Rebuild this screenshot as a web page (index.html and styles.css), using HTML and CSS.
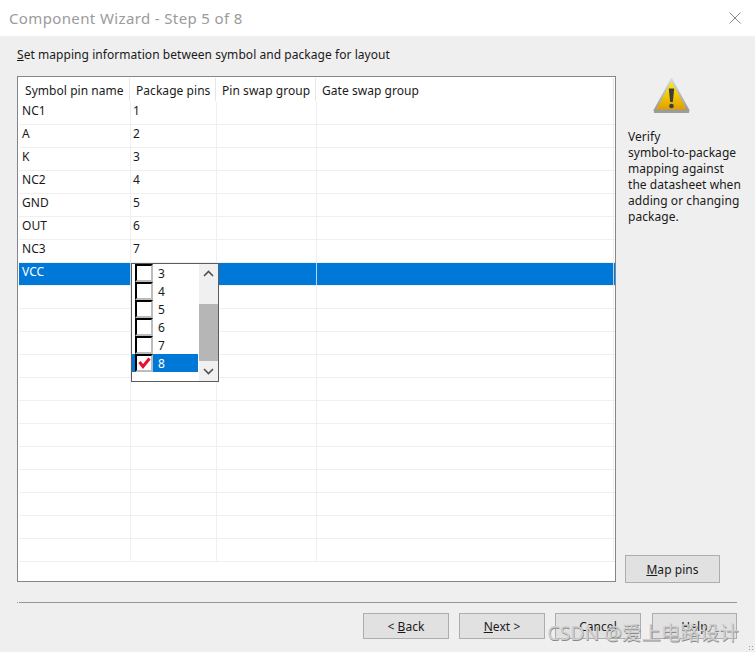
FILE: index.html
```html
<!DOCTYPE html>
<html lang="en">
<head>
<meta charset="utf-8">
<title>Component Wizard - Step 5 of 8</title>
<link rel="stylesheet" href="styles.css">
</head>
<body>
<div class="window">
  <header class="titlebar">
    <span class="title">Component Wizard - Step 5 of 8</span>
    <svg class="close" width="12" height="12" viewBox="0 0 12 12"><path d="M0.5 0.5L11.5 11.5M11.5 0.5L0.5 11.5" stroke="#8a8a8a" stroke-width="1" fill="none"/></svg>
  </header>
  <main class="content">
    <p class="instruction"><u>S</u>et mapping information between symbol and package for layout</p>
    <div class="columns">
      <div class="grid-box">
        <div class="row head"><div class="cell">Symbol pin name</div><div class="cell">Package pins</div><div class="cell">Pin swap group</div><div class="cell">Gate swap group</div></div>
        <div class="row"><div class="cell">NC1</div><div class="cell">1</div><div class="cell"></div><div class="cell"></div></div>
        <div class="row"><div class="cell">A</div><div class="cell">2</div><div class="cell"></div><div class="cell"></div></div>
        <div class="row"><div class="cell">K</div><div class="cell">3</div><div class="cell"></div><div class="cell"></div></div>
        <div class="row"><div class="cell">NC2</div><div class="cell">4</div><div class="cell"></div><div class="cell"></div></div>
        <div class="row"><div class="cell">GND</div><div class="cell">5</div><div class="cell"></div><div class="cell"></div></div>
        <div class="row"><div class="cell">OUT</div><div class="cell">6</div><div class="cell"></div><div class="cell"></div></div>
        <div class="row"><div class="cell">NC3</div><div class="cell">7</div><div class="cell"></div><div class="cell"></div></div>
        <div class="row selected"><div class="cell">VCC</div><div class="cell"></div><div class="cell"></div><div class="cell"></div></div>
        <div class="row"><div class="cell"></div><div class="cell"></div><div class="cell"></div><div class="cell"></div></div>
        <div class="row"><div class="cell"></div><div class="cell"></div><div class="cell"></div><div class="cell"></div></div>
        <div class="row"><div class="cell"></div><div class="cell"></div><div class="cell"></div><div class="cell"></div></div>
        <div class="row"><div class="cell"></div><div class="cell"></div><div class="cell"></div><div class="cell"></div></div>
        <div class="row"><div class="cell"></div><div class="cell"></div><div class="cell"></div><div class="cell"></div></div>
        <div class="row"><div class="cell"></div><div class="cell"></div><div class="cell"></div><div class="cell"></div></div>
        <div class="row"><div class="cell"></div><div class="cell"></div><div class="cell"></div><div class="cell"></div></div>
        <div class="row"><div class="cell"></div><div class="cell"></div><div class="cell"></div><div class="cell"></div></div>
        <div class="row"><div class="cell"></div><div class="cell"></div><div class="cell"></div><div class="cell"></div></div>
        <div class="row"><div class="cell"></div><div class="cell"></div><div class="cell"></div><div class="cell"></div></div>
        <div class="row"><div class="cell"></div><div class="cell"></div><div class="cell"></div><div class="cell"></div></div>
        <div class="row"><div class="cell"></div><div class="cell"></div><div class="cell"></div><div class="cell"></div></div>
        <div class="popup">
          <div class="options">
            <div class="option"><span class="check"></span>3</div>
            <div class="option"><span class="check"></span>4</div>
            <div class="option"><span class="check"></span>5</div>
            <div class="option"><span class="check"></span>6</div>
            <div class="option"><span class="check"></span>7</div>
            <div class="option active"><span class="check"><svg width="13" height="12" viewBox="0 0 13 12"><path d="M1.500 5L5 9.500L11.500 1.500" stroke="#e8112d" stroke-width="3" fill="none"/></svg></span>8</div>
          </div>
          <div class="scrollbar">
            <svg class="arrow" width="19" height="18" viewBox="0 0 19 18"><path d="M5 12L9.500 7.500L14 12" stroke="#505050" stroke-width="1.600" fill="none"/></svg>
            <div class="track"><div class="thumb"></div></div>
            <svg class="arrow" width="19" height="18" viewBox="0 0 19 18"><path d="M5 6L9.500 10.500L14 6" stroke="#505050" stroke-width="1.600" fill="none"/></svg>
          </div>
        </div>
      </div>
      <aside class="side">
        <svg class="warn" width="37" height="36" viewBox="0 0 37 36">
          <defs>
            <linearGradient id="warnFill" x1="0" y1="0" x2="0" y2="1"><stop offset="0" stop-color="#fff200"/><stop offset="0.55" stop-color="#f2c500"/><stop offset="1" stop-color="#dd9c00"/></linearGradient>
            <linearGradient id="warnEdge" x1="0" y1="0" x2="0" y2="1"><stop offset="0" stop-color="#d8d8d8"/><stop offset="1" stop-color="#9a9a9a"/></linearGradient>
          </defs>
          <path d="M18.500 1.500L35.500 32.500H1.500Z" fill="url(#warnFill)" stroke="url(#warnEdge)" stroke-width="2.200" stroke-linejoin="round"/>
          <rect x="1" y="32.500" width="35" height="2.500" fill="#9c9c9c"/>
          <path d="M15.800 10.500H21.200L19.800 24H17.200Z" fill="#3c3c3c"/>
          <circle cx="18.500" cy="28" r="2.300" fill="#3c3c3c"/>
        </svg>
        <p class="note">Verify <span class="nowrap">symbol-to-package</span> mapping against the datasheet when adding or changing package.</p>
        <button class="btn map" type="button"><u>M</u>ap pins</button>
      </aside>
    </div>
    <div class="sep"></div>
    <footer class="actions">
      <button class="btn" type="button">&lt; <u>B</u>ack</button>
      <button class="btn" type="button"><u>N</u>ext &gt;</button>
      <button class="btn" type="button">Cancel</button>
      <button class="btn" type="button">Help</button>
    </footer>
  </main>
  <div class="watermark">CSDN @爱上电路设计</div>
  <div class="grip"></div>
</div>
</body>
</html>
```
FILE: styles.css
```css
* { box-sizing: border-box; }
html, body { margin: 0; padding: 0; }
body { font-family: "Noto Sans", "Open Sans", sans-serif; font-size: 12px; letter-spacing: 0.05px; color: #1a1a1a; }
.window { position: relative; width: 755px; height: 652px; background: #efefef; overflow: hidden; display: flex; flex-direction: column; }
.titlebar { height: 36px; background: #fff; display: flex; align-items: center; justify-content: space-between; padding: 0 14px 0 9px; flex: none; }
.title { font-size: 15px; color: #9b9b9b; letter-spacing: 0.37px; }
.content { flex: 1; padding: 0 18px 0 17px; display: flex; flex-direction: column; }
.instruction { margin: 10px 0 0; height: 30px; line-height: 17px; }
.columns { display: flex; height: 506px; flex: none; }
.grid-box { position: relative; width: 599px; height: 506px; flex: none; background: #fff; border: 1px solid #85858d; padding-left: 1px; overflow: hidden; }
.row { display: grid; grid-template-columns: 112px 86px 100px 297px; height: 23px; border-bottom: 1px solid #efefef; }
.cell { border-right: 1px solid #efefef; padding-left: 2px; line-height: 18px; white-space: nowrap; }
.row .cell:first-child { padding-left: 3px; }
.row.head { grid-template-columns: 111px 86px 100px 298px; height: 25px; border-bottom: 0; padding-top: 1px; }
.row.head .cell { padding-left: 6px; line-height: 26px; height: 23px; border-right-color: #e6e6e6; }
.row.head .cell:first-child { padding-left: 6px; }
.row.selected { background: #0078d7; color: #fff; }
.selected .cell { border-right-color: #b8d6f0; }
.popup { position: absolute; left: 113px; top: 186px; width: 88px; height: 119px; background: #fff; border: 1px solid #5c5c5c; display: flex; color: #1a1a1a; }
.options { width: 66px; flex: none; }
.option { height: 18px; display: flex; align-items: center; gap: 5px; padding-left: 3px; }
.option.active { background: #0078d7; color: #fff; }
.check { width: 18px; height: 18px; flex: none; background: #fff; border-style: solid; border-width: 2px; border-color: #000 #bcbcbc #bcbcbc #000; display: flex; align-items: center; justify-content: center; }
.scrollbar { flex: 1; margin-left: 1px; background: #f0f0f0; display: flex; flex-direction: column; }
.arrow { flex: none; }
.track { flex: 1; padding-top: 22px; }
.thumb { height: 57px; background: #b6b6b6; }
.side { flex: 1; display: flex; flex-direction: column; position: relative; }
.warn { margin: 2px 0 0 37px; flex: none; }
.note { margin: 15px 0 0 12px; width: 114px; line-height: 16px; }
.nowrap { white-space: nowrap; }
.map { margin: auto 0 -1px 9px; }
.btn { width: 86px; height: 26px; padding: 0; background: #e1e1e1; border: 1px solid #adadad; font: inherit; letter-spacing: inherit; color: #1a1a1a; }
.btn.map { width: 95px; height: 28px; }
.sep { position: relative; height: 1px; margin-top: 20px; background: #969696; margin-left: 2px; }
.sep::before { content: ""; position: absolute; left: -2px; top: 0; width: 1px; height: 1px; background: #969696; }
.actions { display: flex; justify-content: flex-end; gap: 10px; margin-top: 10px; }
.actions .btn:last-child { margin-left: 1px; width: 85px; }
.watermark { position: absolute; right: 16px; top: 620px; font-size: 19.5px; line-height: 26px; letter-spacing: 0; color: #cfcfcf; text-shadow: 0.5px 0.5px 0 #8a8a8a; white-space: nowrap; font-family: "Noto Sans", "Noto Sans CJK SC", sans-serif; }
.grip { position: absolute; right: 0; bottom: 0; width: 7px; height: 7px; background: radial-gradient(circle, #9a9a9a 0.8px, transparent 1px) 0 0 / 3px 3px; }
```
